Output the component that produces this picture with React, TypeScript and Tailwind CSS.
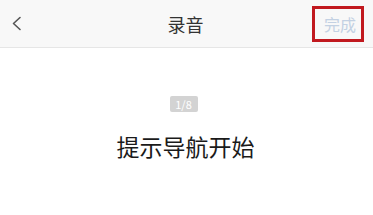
export default function App() {
  return (
    <div className="w-[373px] h-[215px] bg-white overflow-hidden" style={{ fontFamily: '"Noto Sans CJK SC", "Noto Sans", sans-serif' }}>
      {/* Header */}
      <div className="grid grid-cols-[1fr_auto_1fr] items-center h-[48px] bg-[#f8f8f8] border-b border-[#e6e6e6]">
        <div className="pl-[11px] flex items-center">
          <svg width="11" height="15" viewBox="0 0 11 15" fill="none">
            <path d="M9 1.5 L2.5 7.5 L9 13.5" stroke="#555" strokeWidth="1.6" strokeLinecap="round" strokeLinejoin="round" />
          </svg>
        </div>
        <div className="text-[18px] leading-[24px] text-[#333] -ml-[2px]">录音</div>
        <div className="flex justify-end pr-[9px]">
          <div className="border-[3px] border-[#c1191f] w-[52px] h-[36px] flex items-center justify-center">
            <span className="text-[16px] leading-[20px] text-[#c3d1e3] pl-[4px]">完成</span>
          </div>
        </div>
      </div>

      {/* Body */}
      <div className="flex flex-col items-center pt-[48px]">
        <div className="bg-[#d3d3d3] text-white text-[11px] leading-[16px] h-[16px] w-[28px] text-center rounded-[2px] -ml-[6px]">1/8</div>
        <div className="mt-[18px] text-[23px] leading-[32px] text-[#1a1a1a] -ml-[2px]">提示导航开始</div>
      </div>
    </div>
  )
}
